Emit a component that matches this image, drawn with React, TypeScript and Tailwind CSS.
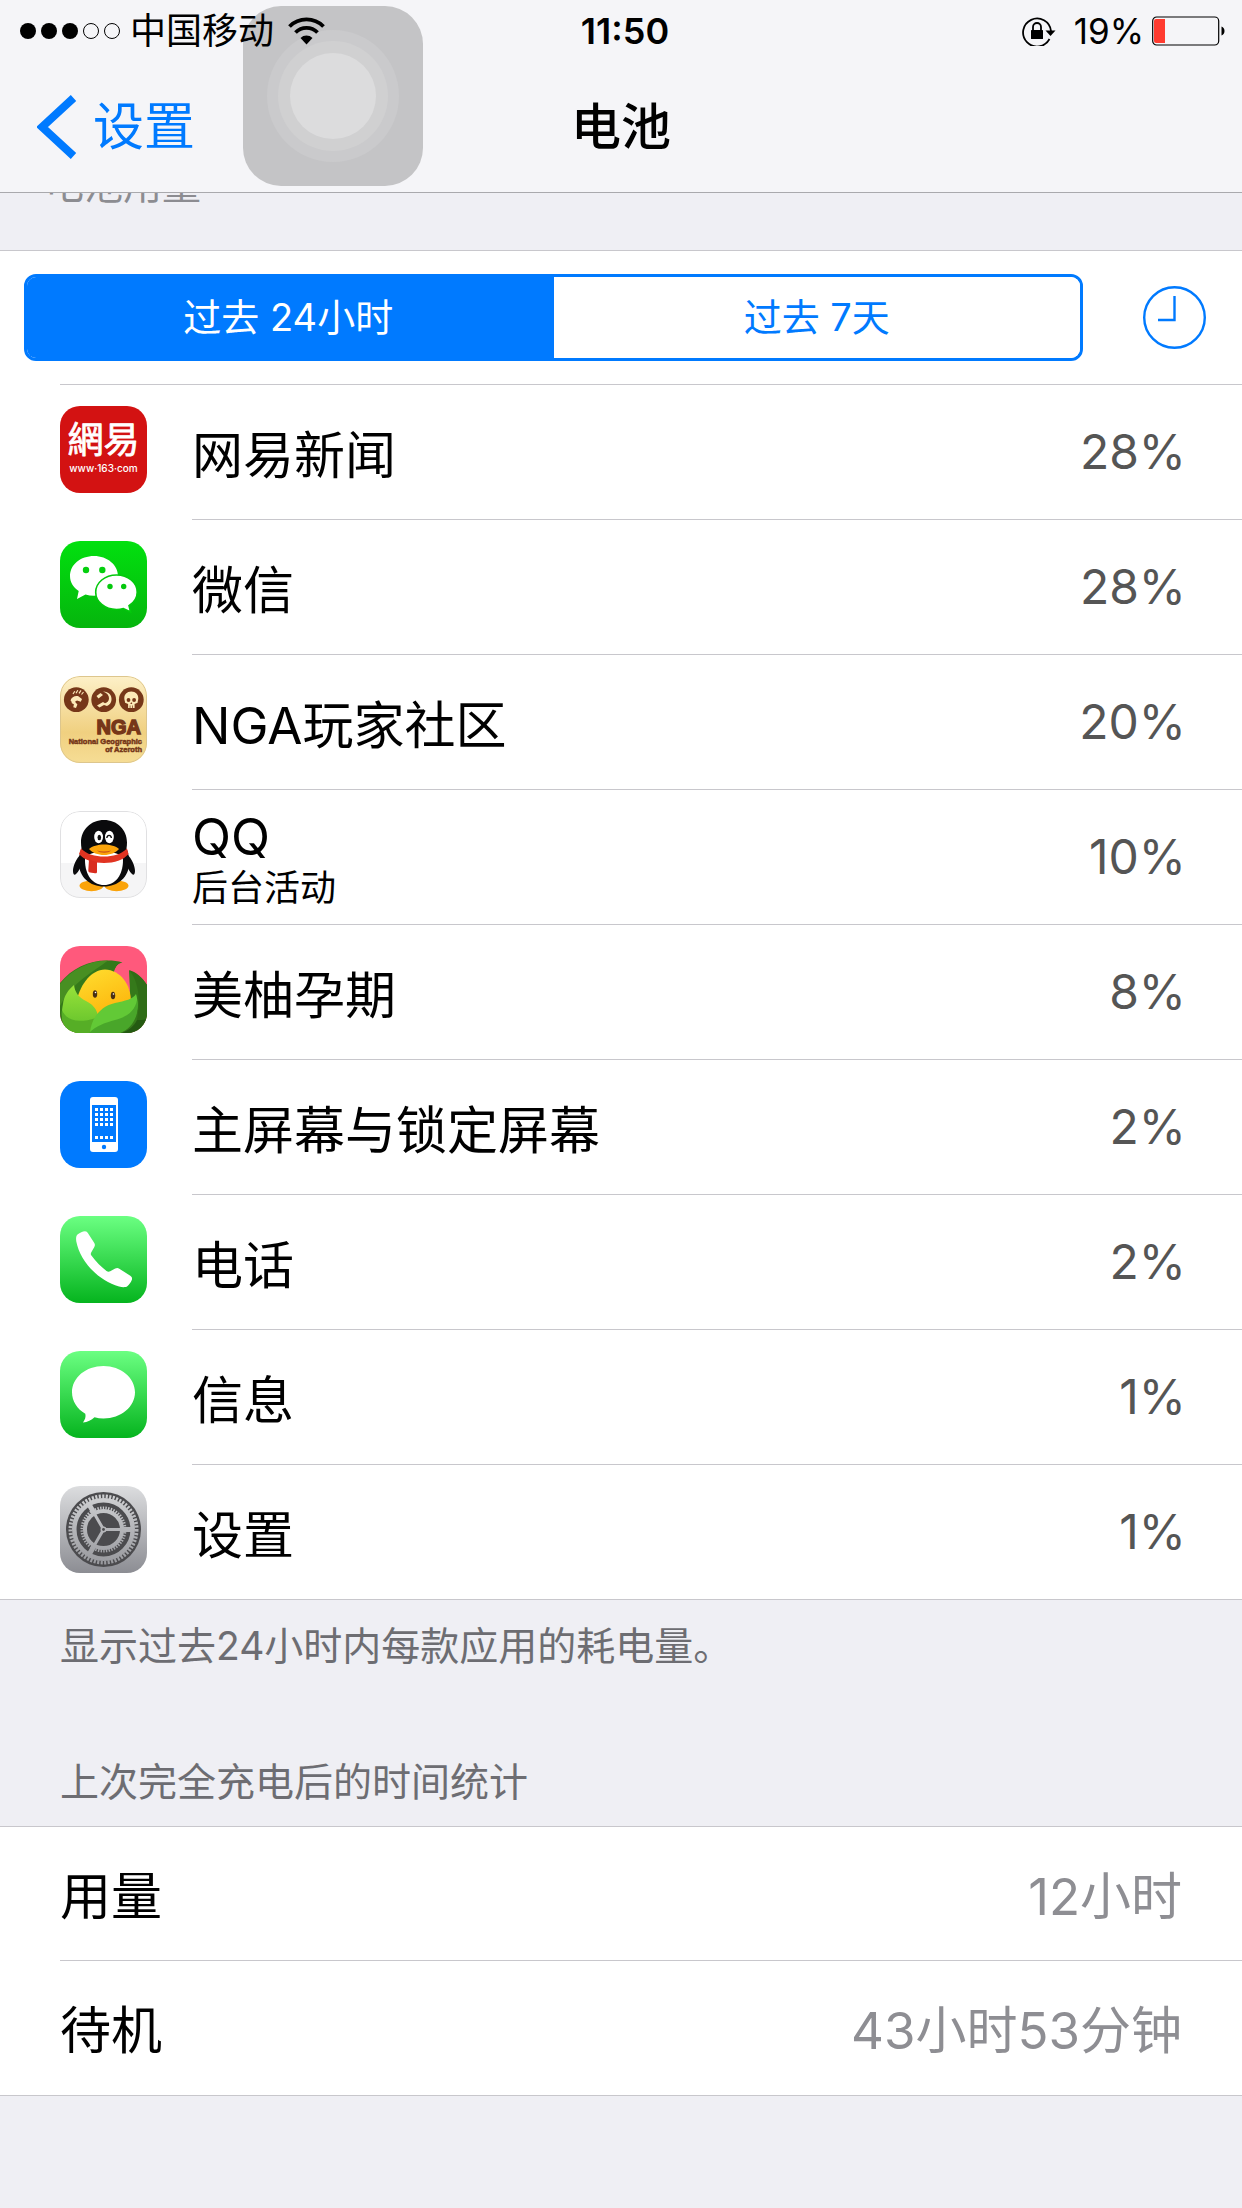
import type { ReactNode } from "react";

const TEETH_OUTER = "2.1 1.4";
const TEETH_INNER = "1.4 1.3";

function NeteaseIcon() {
  return (
    <svg viewBox="0 0 87 87" className="size-full" aria-hidden="true">
      <rect width="87" height="87" fill="#d31212" />
      <text
        x="43.5"
        y="47"
        textAnchor="middle"
        fontSize="36"
        fontWeight="400"
        fill="#fff"
        stroke="#fff"
        strokeWidth="0.8"
        strokeLinejoin="round"
        fontFamily='"Noto Sans CJK TC", sans-serif'
      >
        網易
      </text>
      <text
        x="43.5"
        y="66"
        textAnchor="middle"
        fontSize="10"
        fontWeight="500"
        fill="#fff"
        fontFamily='Inter, sans-serif'
      >
        www·163·com
      </text>
    </svg>
  );
}

function WeChatIcon() {
  return (
    <svg viewBox="0 0 87 87" className="size-full" aria-hidden="true">
      <defs>
        <linearGradient id="wechat" x1="0" y1="0" x2="0" y2="1">
          <stop offset="0" stopColor="#02e00f" />
          <stop offset="1" stopColor="#05b50d" />
        </linearGradient>
      </defs>
      <rect width="87" height="87" fill="url(#wechat)" />
      <path
        d="M34 15c-13.500 0-24 8.700-24 20 0 6.200 3.300 11.500 8.700 15L17 58l8.500-4.500c2.700.8 5.500 1.200 8.500 1.200 13.400 0 24-8.700 24-19.700S47.400 15 34 15z"
        fill="#fff"
      />
      <path
        d="M56.500 34c-11.600 0-20.800 7.600-20.800 17.200S44.900 68.500 56.500 68.500c2.400 0 4.700-.3 6.900-1l7.200 3.500-1.600-6.300c5-3.200 8.200-8 8.200-13.500C77.200 41.600 68.100 34 56.500 34z"
        fill="#fff"
        stroke="#04c80d"
        strokeWidth="1.600"
      />
      <circle cx="26" cy="29" r="3.200" fill="#04cf0e" />
      <circle cx="42.300" cy="29" r="3.200" fill="#04cf0e" />
      <circle cx="50" cy="45.500" r="2.700" fill="#04c80d" />
      <circle cx="63.700" cy="45.500" r="2.700" fill="#04c80d" />
    </svg>
  );
}

function NgaIcon() {
  return (
    <svg viewBox="0 0 87 87" className="size-full" aria-hidden="true">
      <defs>
        <linearGradient id="nga" x1="0" y1="0" x2="0" y2="1">
          <stop offset="0" stopColor="#fdf0c8" />
          <stop offset="0.650" stopColor="#f0d080" />
          <stop offset="1" stopColor="#f6dd95" />
        </linearGradient>
      </defs>
      <rect width="87" height="87" fill="url(#nga)" />
      <g fill="#763719">
        <circle cx="16.300" cy="23.700" r="12.400" />
        <circle cx="43.700" cy="23.700" r="12.400" />
        <circle cx="71.300" cy="23.700" r="12.400" />
      </g>
      <g fill="#fbe9b8">
        <path d="M10.500 24.500c1-3.500 4-5 7.500-4.500l4 3-1.200 2.800-3.800-1.300-2 1.300 2.400 2.700-1.400 3.500-2.700-.8.600-3-2-1-.6-2z" />
        <path d="M13 18l1.800-2.800M16 17.200l1.800-3M19 17.300l2-3M21.500 18.500l2-2.500" stroke="#fbe9b8" strokeWidth="1.200" />
        <path d="M43 15.500c6 0 9 4 8.500 8.500-.3 3-2 5-4.500 6l-3-1-4.500 2.500-2.500-2 6-3.500 2 1.200c2.500-.8 4-2.500 4-5 0-3-2-5-6-6.700zM36.500 20l4-3 2.500 2-4.500 3.500z" />
        <path d="M71.300 15.500c-4.500 0-7 3-7 6.700 0 2 .8 3.200.8 4.500l3 1.200v4h6.500v-4l3-1.200c0-1.300.7-2.500.7-4.500 0-3.700-2.500-6.700-7-6.700z" />
      </g>
      <g fill="#763719">
        <circle cx="68.500" cy="24" r="1.900" />
        <circle cx="74.100" cy="24" r="1.900" />
        <path d="M71.300 26l-1 2h2zM69.700 29.500h.7v2.500h-.7zM72 29.500h.7v2.500H72z" />
      </g>
      <g
        fill="#763719"
        stroke="#763719"
        fontWeight="700"
        textAnchor="end"
        fontFamily='"Liberation Sans", sans-serif'
      >
        <text x="81" y="57.500" fontSize="20" strokeWidth="1.400">NGA</text>
        <text x="82" y="67.500" fontSize="7.500" strokeWidth="0.500">National Geographic</text>
        <text x="82" y="76" fontSize="7.500" strokeWidth="0.500">of Azeroth</text>
      </g>
      <rect x="0.500" y="0.500" width="86" height="86" rx="19.500" fill="none" stroke="#ddc68d" />
    </svg>
  );
}

function QQIcon() {
  return (
    <svg viewBox="0 0 87 87" className="size-full" aria-hidden="true">
      <rect width="87" height="87" fill="#fff" />
      <rect y="52" width="87" height="35" fill="#f5f5f6" />
      <g fill="#faa30a">
        <ellipse cx="31.500" cy="74.800" rx="12" ry="5.400" />
        <ellipse cx="56.500" cy="74.800" rx="12" ry="5.400" />
      </g>
      <path d="M21 43c-5 5-8 12-8 17 0 3.500 1.500 4.500 3 3 2-2 3.500-4.500 4.500-6.500zM67 43c5 5 8 12 8 17 0 3.500-1.500 4.500-3 3-2-2-3.500-4.500-4.500-6.500z" fill="#0a0a0c" />
      <path d="M44 9c-13 0-23 9.500-23 22.500 0 2 .2 4 .5 6-2 4-2.500 9-2.500 15C19 66 30 75.500 44 75.500S69 66 69 52.500c0-6-.5-11-2.500-15 .3-2 .5-4 .5-6C67 18.500 57 9 44 9z" fill="#0a0a0c" />
      <path d="M25 49c0-5 6-8 19-8s19 3 19 8c0 15-7.500 25-19 25S25 64 25 49z" fill="#fff" />
      <path d="M21 37.500c6 6 14 8 23 8s17-2 23-8l1.500 5.500c-5 6-14 9-24.500 9S24 49 19 43z" fill="#e13422" />
      <path d="M29 48.500l8 2.500v10c0 1-1 1.500-2 1.200l-5-.7c-1.200-.2-1.800-1-1.700-2.200z" fill="#d92d1f" />
      <ellipse cx="38.600" cy="26" rx="4.400" ry="6.200" fill="#fff" />
      <ellipse cx="49.400" cy="26" rx="4.400" ry="6.200" fill="#fff" />
      <ellipse cx="39.300" cy="26.500" rx="1.800" ry="2.800" fill="#111" />
      <path d="M46.800 27c.5-3.500 4-3.500 4.600 0" fill="none" stroke="#111" strokeWidth="1.400" />
      <path d="M29 38c3-3 9-4.600 15-4.600S56 35 59 38c-3 3.800-9 6-15 6s-12-2.200-15-6z" fill="#fba40a" />
      <path d="M37 39.500c4.500 1.200 9.500 1.200 14 0-2.500 3-11 3-14 0z" fill="#c5501b" />
      <rect x="0.500" y="0.500" width="86" height="86" rx="19.500" fill="none" stroke="#e0e0e2" />
    </svg>
  );
}

function MeiyouIcon() {
  return (
    <svg viewBox="0 0 87 87" className="size-full" aria-hidden="true">
      <defs>
        <linearGradient id="corn" x1="0" y1="0" x2="0.500" y2="1">
          <stop offset="0" stopColor="#ffdf30" />
          <stop offset="1" stopColor="#fdb60d" />
        </linearGradient>
        <linearGradient id="leafLeft" x1="0" y1="0" x2="0" y2="1">
          <stop offset="0" stopColor="#98e23a" />
          <stop offset="1" stopColor="#5fbf2a" />
        </linearGradient>
      </defs>
      <rect width="87" height="87" fill="#ff597c" />
      <path d="M0 37C12 22 30 14 48 14.500c5 0 10 .5 14.500 2C57 18 56 21 54 27L70 48l-2-24c7 2 15 8 19 15v48H0z" fill="#35791a" />
      <path d="M0 38C12 23 30 14.500 48 14.500 36 24 12 36 0 60z" fill="#488f22" />
      <path d="M54 26c1-4 3-8 8.500-9.500L69 17v8l1 20z" fill="#ff597c" />
      <path d="M69 24c9 10 12 28 8 50h10V39c-5-8-11-13-18-15z" fill="#2f6d16" />
      <path d="M17 53c4-15 14-29 28-29.500C60 24 71 38 71 56L38 72z" fill="url(#corn)" />
      <path d="M14 39c1 7 4 12 12 16 6 3 10 7 11.500 13L31 87H10C3 80 0 72 3 58c1-8 5-14 11-19z" fill="url(#leafLeft)" />
      <path d="M2 64c4 10 15 14 34 8l-6 15H9C4 82 1 74 2 64z" fill="#56ae26" />
      <path d="M30 87c1-15 11-27 25-30 10-2 18-4 21-9 5 16-2 33-17 39z" fill="#62c936" />
      <path d="M29 87c8-8 16-10 26-13 12-3 20-9 22-20 3 17-6 29-17 33z" fill="#49a62a" />
      <path d="M77 74c3 0 7 0 10-1v14H62c7-3 12-7 15-13z" fill="#245a12" />
      <ellipse cx="35" cy="48" rx="2.200" ry="3.800" fill="#493014" />
      <ellipse cx="53" cy="49.500" rx="2.200" ry="3.800" fill="#493014" />
      <circle cx="35.500" cy="46.500" r="0.800" fill="#fff" />
      <circle cx="53.500" cy="48" r="0.800" fill="#fff" />
    </svg>
  );
}

function HomeScreenIcon() {
  const rows = [27, 32, 37, 42, 55];
  const columns = [35, 40, 45, 50];
  return (
    <svg viewBox="0 0 87 87" className="size-full" aria-hidden="true">
      <rect width="87" height="87" fill="#007aff" />
      <rect x="30" y="16" width="28" height="55" rx="3" fill="#fff" />
      <rect x="32" y="24" width="24" height="37" fill="#007aff" />
      {rows.map((y) =>
        columns.map((x) => <rect key={`${x}-${y}`} x={x} y={y} width="3" height="3" fill="#fff" />),
      )}
      <circle cx="44" cy="66" r="2.200" fill="#007aff" />
    </svg>
  );
}

function PhoneIcon() {
  return (
    <svg viewBox="0 0 87 87" className="size-full" aria-hidden="true">
      <defs>
        <linearGradient id="phone" x1="0" y1="0" x2="0" y2="1">
          <stop offset="0" stopColor="#6bff82" />
          <stop offset="1" stopColor="#05b41e" />
        </linearGradient>
      </defs>
      <rect width="87" height="87" fill="url(#phone)" />
      <path
        d="M17.500 18.500C20 16.500 22.500 15.500 25 15.300c1.400 0 2.300.8 3 1.900l6.300 9.800c.9 1.500.7 2.700-.1 4.200l-2.900 5c-.7 1.300-.7 2.300.1 3.400C36 46 41.500 51.300 46.500 55c1.300.9 2.400 1 3.700.3l5-2.700c1.500-.8 2.700-.8 4.100.1l11 7.100c1.700 1.200 2.200 2.600 1.400 4.500-1 2.400-2.600 4.300-4.400 6-1.300 1-4.500 1.300-8.300.2C38 64.500 20 45 16.300 25.500c-.5-3.200-.2-5.600 1.200-7z"
        fill="#fff"
      />
    </svg>
  );
}

function MessagesIcon() {
  return (
    <svg viewBox="0 0 87 87" className="size-full" aria-hidden="true">
      <defs>
        <linearGradient id="messages" x1="0" y1="0" x2="0" y2="1">
          <stop offset="0" stopColor="#6bff82" />
          <stop offset="1" stopColor="#05b41e" />
        </linearGradient>
      </defs>
      <rect width="87" height="87" fill="url(#messages)" />
      <path
        d="M43.500 15C26 15 12 26.500 12 41.300c0 9 5.200 16.700 13.300 21.500.8 3-.3 6-2.300 8.700 4.500-.4 8.500-2.200 11.500-5.200 2.900.8 5.900 1.200 9 1.200 17.500 0 31.500-11.700 31.500-26.200S61 15 43.500 15z"
        fill="#fff"
      />
    </svg>
  );
}

function SettingsIcon() {
  return (
    <svg viewBox="0 0 87 87" className="size-full" aria-hidden="true">
      <defs>
        <linearGradient id="settings" x1="0" y1="0" x2="0" y2="1">
          <stop offset="0" stopColor="#dcdddf" />
          <stop offset="1" stopColor="#8c8d93" />
        </linearGradient>
        <linearGradient id="gear" x1="0" y1="6" x2="0" y2="81" gradientUnits="userSpaceOnUse">
          <stop offset="0" stopColor="#d2d3d5" />
          <stop offset="1" stopColor="#96979c" />
        </linearGradient>
      </defs>
      <rect width="87" height="87" fill="url(#settings)" />
      <circle cx="43.500" cy="43.500" r="37.500" fill="#4b4b4e" />
      <g fill="none" stroke="url(#gear)">
        <circle cx="43.500" cy="43.500" r="33" strokeWidth="4" strokeDasharray={TEETH_OUTER} />
        <circle cx="43.500" cy="43.500" r="29.200" strokeWidth="4.500" />
        <circle cx="43.500" cy="43.500" r="21.500" strokeWidth="3" strokeDasharray={TEETH_INNER} />
        <circle cx="43.500" cy="43.500" r="18.500" strokeWidth="4" />
        <path d="M43.500 43.500L72 43.600M43.500 43.500L29.200 68.200M43.500 43.500L29.200 18.800" strokeWidth="3" />
      </g>
      <path d="M63 43.500L71 43.600M33.700 60.500l-4 7M33.700 26.500l-4-7" stroke="url(#gear)" strokeWidth="5" />
      <circle cx="43.500" cy="43.500" r="3" fill="#b5b6b9" />
      <circle cx="43.500" cy="43.500" r="1.400" fill="#4b4b4e" />
    </svg>
  );
}

type App = { name: string; detail?: string; share: string; icon: ReactNode };

const apps: App[] = [
  { name: "网易新闻", share: "28%", icon: <NeteaseIcon /> },
  { name: "微信", share: "28%", icon: <WeChatIcon /> },
  { name: "NGA玩家社区", share: "20%", icon: <NgaIcon /> },
  { name: "QQ", detail: "后台活动", share: "10%", icon: <QQIcon /> },
  { name: "美柚孕期", share: "8%", icon: <MeiyouIcon /> },
  { name: "主屏幕与锁定屏幕", share: "2%", icon: <HomeScreenIcon /> },
  { name: "电话", share: "2%", icon: <PhoneIcon /> },
  { name: "信息", share: "1%", icon: <MessagesIcon /> },
  { name: "设置", share: "1%", icon: <SettingsIcon /> },
];

const stats = [
  { label: "用量", value: "12小时" },
  { label: "待机", value: "43小时53分钟" },
];

function StatusBar() {
  return (
    <div className="grid h-15 grid-cols-[1fr_auto_1fr] items-center pt-0.5 pr-4 pl-5 text-[36px] leading-[44px]">
      <div className="relative z-20 flex items-center">
        <svg viewBox="0 0 100 16" className="h-4 w-[100px]" role="img" aria-label="信号强度">
          <circle cx="8" cy="8" r="8" />
          <circle cx="29" cy="8" r="8" />
          <circle cx="50" cy="8" r="8" />
          <circle cx="71" cy="8" r="7.500" fill="none" stroke="#000" />
          <circle cx="92" cy="8" r="7.500" fill="none" stroke="#000" />
        </svg>
        <span className="ml-2.5">中国移动</span>
        <svg viewBox="0 0 37 28" className="ml-3.5 h-7 w-[37px]" role="img" aria-label="无线局域网">
          <path d="M1.500 9.500a24 24 0 0 1 34 0M7.500 15.500a15.500 15.500 0 0 1 22 0" fill="none" stroke="#000" strokeWidth="3.800" />
          <path d="M18.500 27.500l-6-6.500a8.500 8.500 0 0 1 12 0z" />
        </svg>
      </div>
      <div className="pl-1 font-semibold">11:50</div>
      <div className="flex items-center justify-end">
        <svg viewBox="0 0 35 30" className="h-[30px] w-[35px]" role="img" aria-label="竖排方向锁定">
          <path d="M28.500 23a14 14 0 1 1 1.500-8" fill="none" stroke="#000" strokeWidth="1.800" />
          <path d="M24.500 14.500h10l-5 5.500z" />
          <rect x="10" y="14" width="12" height="9" rx="0.500" />
          <path d="M12 14v-3a4 4 0 0 1 8 0v3" fill="none" stroke="#000" strokeWidth="1.800" />
        </svg>
        <span className="ml-[18px] text-[35px]">19%</span>
        <svg viewBox="0 0 74 30" className="ml-2 h-[30px] w-[74px]" role="img" aria-label="电池电量">
          <rect x="0.700" y="1" width="66" height="28" rx="4" fill="none" stroke="#000" strokeWidth="1.200" />
          <path d="M4 3h9v24H4a2 2 0 0 1-2-2V5a2 2 0 0 1 2-2z" fill="#ff3b30" />
          <path d="M69.500 10.500c4 1 4 8 0 9z" />
        </svg>
      </div>
    </div>
  );
}

function AssistiveTouch() {
  return (
    <button
      type="button"
      aria-label="辅助触控"
      className="absolute top-1.5 left-[243px] z-10 flex size-[180px] items-center justify-center rounded-[38px] bg-[#c4c4c6]"
    >
      <span className="flex size-[132px] items-center justify-center rounded-full bg-[#cacacc]">
        <span className="flex size-[110px] items-center justify-center rounded-full bg-[#d0d0d1]">
          <span className="size-[86px] rounded-full bg-[#dcdcdd]" />
        </span>
      </span>
    </button>
  );
}

export default function App() {
  return (
    <div className="min-h-screen bg-[#efeff4] font-[Inter,'Noto_Sans_CJK_SC',sans-serif] text-black">
      <header className="relative z-10 border-b border-[#a9a9ad] bg-[#f5f5f8]">
        <StatusBar />
        <AssistiveTouch />
        <nav className="grid h-33 grid-cols-[1fr_auto_1fr] items-center px-[37px] pt-0.5 text-[51px] leading-[66px]">
          <a href="#settings" className="flex items-center gap-4 justify-self-start text-[#007aff]">
            <svg viewBox="0 0 40 64" className="h-16 w-10" aria-hidden="true">
              <path d="M36.500 3L5 32l31.500 29" fill="none" stroke="currentColor" strokeWidth="8" />
            </svg>
            设置
          </a>
          <h1 className="text-[50px] font-medium">电池</h1>
        </nav>
      </header>

      <main>
        <h2 className="-mt-8 h-[89px] pl-[45px] text-[39px] leading-[48px] text-[#8c8c91]">电池用量</h2>

        <section className="border-y border-[#c8c7cc] bg-white">
          <div className="flex items-center gap-15 pt-[23px] pr-9 pb-[23px] pl-6">
            <div className="grid h-[87px] flex-1 grid-cols-2 overflow-hidden rounded-[12px] border-3 border-[#007aff] text-[38px] leading-[50px]">
              <button type="button" aria-pressed="true" className="bg-[#007aff] pr-1 pb-0.5 text-white">
                过去 24小时
              </button>
              <button type="button" aria-pressed="false" className="bg-white pb-0.5 text-[#007aff]">
                过去 7天
              </button>
            </div>
            <button type="button" aria-label="显示使用时间" className="text-[#007aff]">
              <svg viewBox="0 0 63 63" className="size-[63px]">
                <circle cx="31.500" cy="31.500" r="30.300" fill="none" stroke="currentColor" strokeWidth="2.400" />
                <path d="M31.500 10v24H15" fill="none" stroke="currentColor" strokeWidth="2.400" />
              </svg>
            </button>
          </div>

          <ul className="ml-15 border-t border-[#c8c7cc]">
            {apps.map((app) => (
              <li key={app.name} className="group flex">
                <div className="mt-[21px] mr-[45px] size-[87px] shrink-0 overflow-hidden rounded-[20px]">{app.icon}</div>
                <div className="flex h-[135px] flex-1 items-center justify-between border-b border-[#c8c7cc] pr-14 group-last:h-[134px] group-last:border-b-0">
                  <div className="pt-2">
                    <div className={app.detail ? "text-[51px] leading-[54px]" : "text-[51px] leading-[66px]"}>
                      {app.name}
                    </div>
                    {app.detail && <div className="text-[36px] leading-[48px]">{app.detail}</div>}
                  </div>
                  <div className="text-[48px] leading-[66px] text-[#555]">{app.share}</div>
                </div>
              </li>
            ))}
          </ul>
        </section>

        <p className="px-15 pt-5 text-[39px] leading-[52px] text-[#6d6d72]">显示过去24小时内每款应用的耗电量。</p>

        <h2 className="px-15 pt-21 pb-[18px] text-[39px] leading-[52px] text-[#6d6d72]">上次完全充电后的时间统计</h2>

        <dl className="border-y border-[#c8c7cc] bg-white pl-15">
          {stats.map((stat) => (
            <div
              key={stat.label}
              className="flex h-[134px] items-center justify-between border-[#c8c7cc] pt-1.5 pr-15 text-[51px] leading-[66px] not-last:border-b"
            >
              <dt>{stat.label}</dt>
              <dd className="text-[#8e8e93]">{stat.value}</dd>
            </div>
          ))}
        </dl>
      </main>
    </div>
  );
}
